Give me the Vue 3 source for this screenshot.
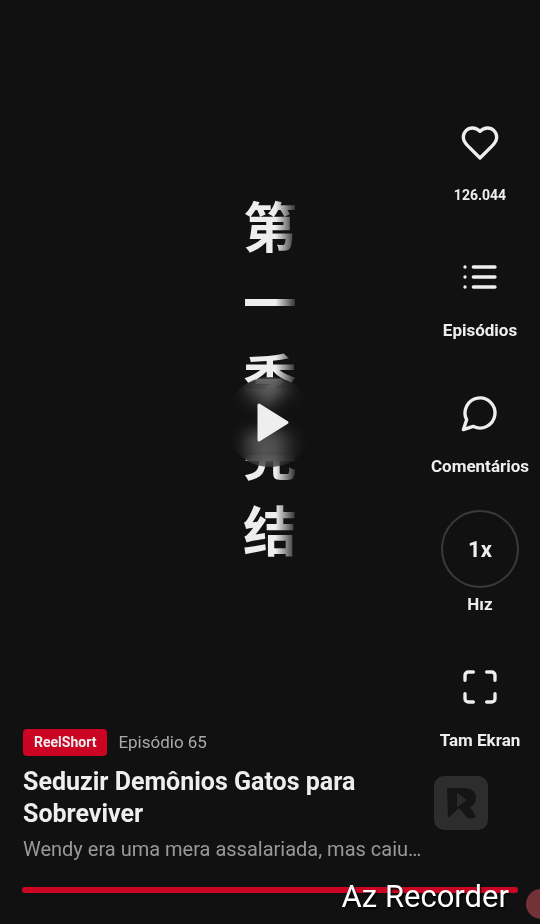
<script setup>
import { ref } from 'vue'

const caption = ['第', '一', '季', '完', '结']
const progress = ref(100)
</script>

<template>
  <main class="player">
    <div class="video">
      <p class="caption"><span v-for="c in caption" :key="c">{{ c }}</span></p>
    </div>

    <div class="center">
      <button class="play" type="button" aria-label="Play">
        <svg viewBox="0 0 40 44"><path d="M9 5v35L37 22.500z" /></svg>
      </button>
    </div>

    <div class="overlay">
      <div class="content">
        <section class="info">
          <div class="meta">
            <span class="tag">ReelShort</span>
            <span class="episode">Episódio 65</span>
          </div>
          <h1>Seduzir Demônios Gatos para Sobreviver</h1>
          <p class="desc">Wendy era uma mera assalariada, mas caiu…</p>
        </section>

        <nav class="rail">
          <button class="action" type="button">
            <span class="icon">
              <svg viewBox="0 0 24 24"><path d="M19 14c1.49-1.46 3-3.21 3-5.5A5.5 5.5 0 0 0 16.5 3c-1.76 0-3 .5-4.5 2-1.5-1.5-2.74-2-4.5-2A5.5 5.5 0 0 0 2 8.500c0 2.300 1.500 4.050 3 5.500l7 7Z" /></svg>
            </span>
            <span class="count">126.044</span>
          </button>
          <button class="action" type="button">
            <span class="icon">
              <svg viewBox="0 0 24 24"><path d="M8 6h13M8 12h13M8 18h13M3 6h.01M3 12h.01M3 18h.01" /></svg>
            </span>
            <span class="label">Episódios</span>
          </button>
          <button class="action" type="button">
            <span class="icon">
              <svg viewBox="0 0 24 24"><path d="M7.9 20A9 9 0 1 0 4 16.100L2 22Z" /></svg>
            </span>
            <span class="label">Comentários</span>
          </button>
          <button class="action speed" type="button">
            <span class="icon ring">1x</span>
            <span class="label">Hız</span>
          </button>
          <button class="action" type="button">
            <span class="icon">
              <svg viewBox="0 0 24 24"><path d="M8 3H5a2 2 0 0 0-2 2v3M21 8V5a2 2 0 0 0-2-2h-3M16 21h3a2 2 0 0 0 2-2v-3M3 16v3a2 2 0 0 0 2 2h3" /></svg>
            </span>
            <span class="label">Tam Ekran</span>
          </button>
        </nav>
      </div>

      <div class="track" role="progressbar" aria-label="Progress" :aria-valuenow="progress">
        <div class="fill" :style="{ width: progress + '%' }"></div>
      </div>
    </div>

    <svg class="logo" viewBox="0 0 54 54" aria-hidden="true">
      <rect width="54" height="54" rx="10" fill="#2d2d2d" />
      <path d="M13 12h17c8 0 12 4 12 10 0 4-2 7-6 9l5 8 1 2c-4 2-8 2-10-1l-7-8-11 10z" fill="#151515" />
      <path d="M23 17v14l10-7z" fill="#2b2b2b" />
    </svg>
    <div class="watermark">Az Recorder</div>
    <div class="dot"></div>
  </main>
</template>

<style>
body {
  background: #111;
}
</style>

<style scoped>
.player {
  position: relative;
  display: grid;
  min-height: 100vh;
  overflow: hidden;
  background: #111;
  color: #eee;
  font-family: Roboto, "Noto Sans CJK SC", sans-serif;
}
.video,
.center,
.overlay {
  grid-area: 1 / 1;
  min-width: 0;
}
.video,
.center {
  display: flex;
  align-items: center;
  justify-content: center;
}
.video {
  padding-bottom: 170px;
}
.center {
  padding-bottom: 80px;
}
.caption {
  display: flex;
  flex-direction: column;
  margin: 0;
  font-family: "Noto Sans CJK SC", sans-serif;
  font-size: 54px;
  font-weight: 700;
  line-height: 76px;
  color: transparent;
  background: linear-gradient(90deg, #eee 60%, #555 90%, #222);
  background-clip: text;
  -webkit-background-clip: text;
}
button {
  padding: 0;
  border: 0;
  background: none;
  color: inherit;
  font-family: inherit;
  cursor: pointer;
}
.play {
  display: flex;
  align-items: center;
  justify-content: center;
  width: 90px;
  height: 90px;
  border-radius: 50%;
  background: rgba(17, 17, 17, 0.5);
  backdrop-filter: blur(8px);
}
.play svg {
  width: 40px;
  height: 44px;
  fill: #eee;
  stroke: #eee;
  stroke-width: 3;
  stroke-linejoin: round;
}
.overlay {
  display: flex;
  flex-direction: column;
  justify-content: flex-end;
  padding-bottom: 31px;
  z-index: 1;
  pointer-events: none;
}
.overlay button {
  pointer-events: auto;
}
.content {
  display: grid;
  grid-template-columns: 1fr 120px;
  align-items: end;
}
.info {
  min-width: 0;
  padding: 0 0 25px 23px;
}
.meta {
  display: flex;
  align-items: center;
  gap: 11px;
}
.tag {
  padding: 0 11px;
  border-radius: 4px;
  background: #cc0424;
  font-size: 14px;
  font-weight: 700;
  line-height: 27px;
}
.episode {
  color: #aaa;
  font-size: 17px;
  line-height: 27px;
}
h1 {
  margin: 10px 0 6px;
  font-size: 25px;
  font-weight: 700;
  line-height: 32px;
}
.desc {
  margin: 0;
  overflow: hidden;
  color: #999;
  font-size: 20px;
  line-height: 26px;
  white-space: nowrap;
}
.rail {
  display: flex;
  flex-direction: column;
  gap: 32px;
  padding-bottom: 135px;
}
.action {
  display: flex;
  flex-direction: column;
  align-items: center;
  gap: 2px;
}
.speed {
  gap: 4px;
}
.icon {
  display: flex;
  align-items: center;
  justify-content: center;
  box-sizing: border-box;
  width: 78px;
  height: 78px;
}
.icon svg {
  width: 40px;
  height: 40px;
  fill: none;
  stroke: #eee;
  stroke-width: 2;
  stroke-linecap: round;
  stroke-linejoin: round;
}
.ring {
  border: 2px solid #3a3a3a;
  border-radius: 50%;
  font-size: 22px;
  font-weight: 700;
}
.label {
  font-size: 17px;
  font-weight: 700;
  line-height: 24px;
}
.count {
  font-size: 14px;
  font-weight: 700;
  line-height: 22px;
}
.track {
  height: 6px;
  margin: 0 22px;
  border-radius: 3px;
  background: #333;
}
.fill {
  height: 100%;
  border-radius: 3px;
  background: #cc0424;
}
.logo {
  position: absolute;
  right: 52px;
  bottom: 94px;
  width: 54px;
  height: 54px;
}
.watermark {
  position: absolute;
  right: 31px;
  bottom: 9px;
  z-index: 2;
  color: #fff;
  font-size: 31px;
  line-height: 36px;
  text-shadow: 1px 2px 2px #000;
}
.dot {
  position: absolute;
  right: -16px;
  bottom: 5px;
  z-index: 2;
  width: 30px;
  height: 30px;
  border-radius: 50%;
  background: #733336;
}
</style>
